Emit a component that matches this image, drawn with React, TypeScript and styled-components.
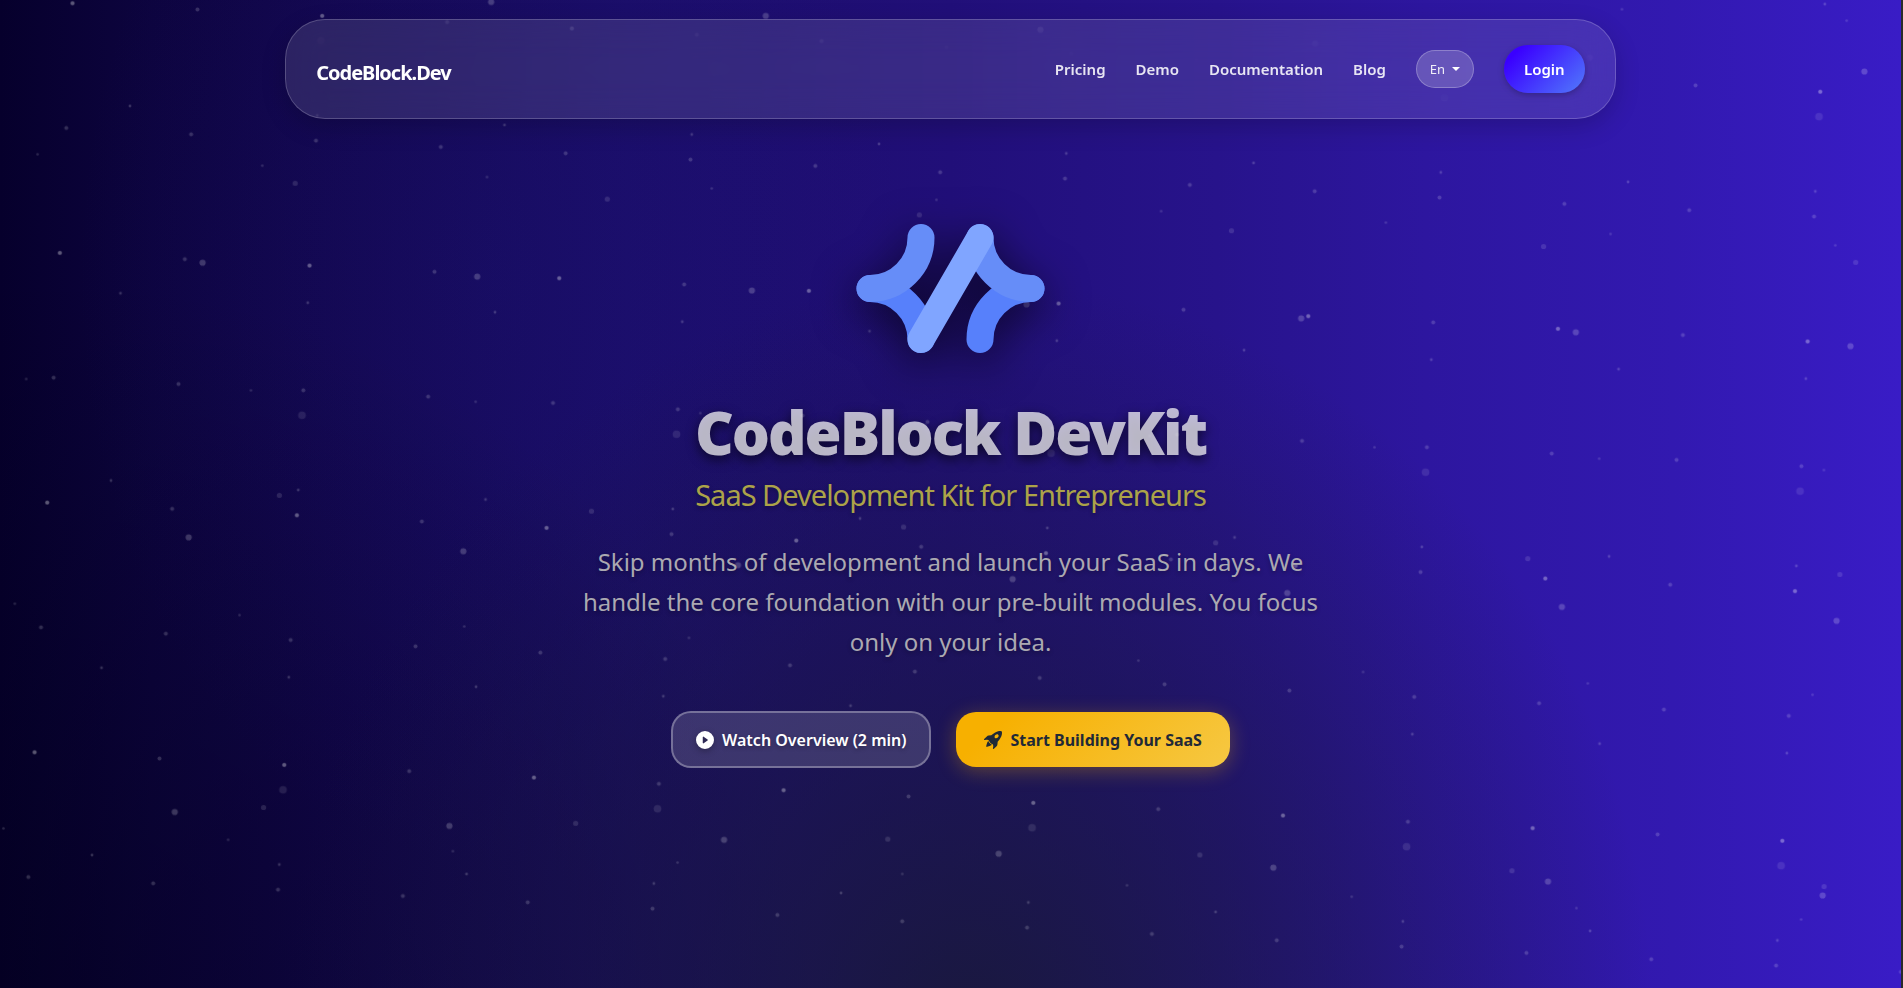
import React from 'react';
import styled, { createGlobalStyle } from 'styled-components';
import { BsPlayCircleFill, BsRocketTakeoffFill } from 'react-icons/bs';

const GlobalStyle = createGlobalStyle`
  * { box-sizing: border-box; }
  body {
    margin: 0;
    background: #2a2a2a;
    font-family: 'Noto Sans', 'Open Sans', sans-serif;
  }
`;

const Page = styled.div`
  position: relative;
  min-height: 100vh;
  margin-right: 2px;
  overflow: hidden;
  background:
    radial-gradient(ellipse 36% 76% at 51% 104%, rgba(24, 26, 52, 0.85) 0%, rgba(24, 24, 56, 0.5) 45%, rgba(24, 22, 60, 0) 100%),
    radial-gradient(ellipse 42% 80% at 2% 108%, rgba(2, 0, 26, 0.55) 0%, rgba(2, 0, 26, 0) 100%),
    radial-gradient(ellipse 22% 60% at 26% 28%, rgba(26, 26, 140, 0.16) 0%, rgba(26, 26, 140, 0) 100%),
    linear-gradient(90deg, #06002c 0%, #0d043f 8%, #13074e 17%, #170a5a 25%, #1b0d68 33%, #210f79 50%, #27138b 64%, #2d169f 75%, #3219b0 88%, #391cc6 100%);
`;

const StarField = styled.svg`
  position: absolute;
  inset: 0;
  width: 100%;
  height: 100%;
  pointer-events: none;
`;

const Content = styled.div`
  position: relative;
  padding-top: 19px;
`;

const Nav = styled.nav`
  display: flex;
  align-items: center;
  justify-content: space-between;
  width: 70%;
  height: 100px;
  margin: 0 auto;
  padding: 0 30px;
  border: 1px solid rgba(255, 255, 255, 0.2);
  border-radius: 40px;
  background: rgba(255, 255, 255, 0.11);
  backdrop-filter: blur(20px);
  box-shadow: 0 8px 24px rgba(0, 0, 0, 0.18);
`;

const Brand = styled.a`
  padding-top: 6px;
  color: #fff;
  font-size: 20px;
  font-weight: 700;
  letter-spacing: -1px;
  text-decoration: none;
`;

const NavItems = styled.div`
  display: flex;
  align-items: center;
  gap: 30px;
`;

const NavLink = styled.a`
  color: rgba(255, 255, 255, 0.88);
  font-size: 15px;
  font-weight: 600;
  text-decoration: none;
`;

const LanguagePicker = styled.div`
  position: relative;
`;

const LanguageSelect = styled.select`
  display: block;
  width: 58px;
  height: 38px;
  padding: 0 13px;
  appearance: none;
  border: 1px solid rgba(255, 255, 255, 0.25);
  border-radius: 19px;
  background: rgba(255, 255, 255, 0.19);
  color: rgba(255, 255, 255, 0.9);
  font-family: inherit;
  font-size: 13px;

  option { color: #1e293b; }
`;

const Caret = styled.svg`
  position: absolute;
  top: 17px;
  right: 14px;
  width: 8px;
  height: 4px;
  pointer-events: none;
`;

const LoginButton = styled.button`
  width: 81px;
  height: 48px;
  padding: 0;
  border: 0;
  border-radius: 24px;
  background: linear-gradient(135deg, #3a00ff 15%, #517bfb 100%);
  box-shadow: 0 2px 6px rgba(0, 0, 0, 0.25);
  color: #fff;
  font-family: inherit;
  font-size: 15px;
  font-weight: 600;
`;

const Hero = styled.main`
  display: flex;
  flex-direction: column;
  align-items: center;
  padding: 104px 24px 0;
  text-align: center;
`;

const Logo = styled.svg`
  width: 190px;
  height: 131px;
  overflow: visible;
  filter: drop-shadow(0 10px 22px rgba(0, 0, 0, 0.65));
`;

const Title = styled.h1`
  margin: 40px 0 5px;
  color: rgba(255, 255, 255, 0.71);
  font-size: 60px;
  font-weight: 900;
  line-height: 76px;
  letter-spacing: -2px;
  text-shadow: 0 4px 12px rgba(0, 0, 0, 0.6);
`;

const Subtitle = styled.p`
  margin: 0;
  color: #aca349;
  font-size: 29px;
  line-height: 40px;
  letter-spacing: -1px;
  text-shadow: 0 2px 4px rgba(0, 0, 0, 0.3);
`;

const Lead = styled.p`
  max-width: 740px;
  margin: 27px 0 0;
  color: #aba9b1;
  font-size: 24px;
  line-height: 40px;
  text-shadow: 0 2px 4px rgba(0, 0, 0, 0.3);
`;

const Actions = styled.div`
  display: flex;
  align-items: center;
  gap: 25px;
  margin-top: 49px;
`;

const ActionButton = styled.button<{ $primary?: boolean }>`
  display: flex;
  align-items: center;
  gap: 8px;
  height: ${(p) => (p.$primary ? 55 : 57)}px;
  padding: ${(p) => (p.$primary ? '0 28px' : '0 23px')};
  border: ${(p) => (p.$primary ? '0' : '2px solid rgba(255, 255, 255, 0.3)')};
  border-radius: 20px;
  background: ${(p) =>
    p.$primary ? 'linear-gradient(135deg, #f7b000 15%, #f6c843 100%)' : 'rgba(255, 255, 255, 0.15)'};
  box-shadow: ${(p) => (p.$primary ? '0 4px 20px rgba(247, 176, 0, 0.3)' : 'none')};
  color: ${(p) => (p.$primary ? '#1f2937' : '#fff')};
  font-family: inherit;
  font-size: 16px;
  font-weight: ${(p) => (p.$primary ? 700 : 600)};
  text-shadow: ${(p) => (p.$primary ? 'none' : '0 2px 4px rgba(0, 0, 0, 0.3)')};

  svg {
    width: 18px;
    height: 18px;
    filter: ${(p) => (p.$primary ? 'none' : 'drop-shadow(0 2px 3px rgba(0, 0, 0, 0.3))')};
  }
`;

// Each star layer repeats one dot on a square grid; the whole sky is tilted slightly.
const SKY_TILT = 2.9;
const STAR_LAYERS = [
  { id: 'a', size: 125, x: 66.3, y: 128, r: 2, alpha: 0.17 },
  { id: 'b', size: 250, x: 59.8, y: 253, r: 2.1, alpha: 0.2 },
  { id: 'c', size: 275, x: 202.6, y: 262.7, r: 3.1, alpha: 0.2 },
  { id: 'd', size: 312.5, x: 295.2, y: 183.3, r: 2.6, alpha: 0.12 },
  { id: 'e', size: 375, x: 302, y: 415.3, r: 3.8, alpha: 0.1 },
  { id: 'f', size: 187.5, x: 120.5, y: 293.3, r: 1.4, alpha: 0.18 },
  { id: 'g', size: 225, x: 37.6, y: 154.3, r: 1.3, alpha: 0.14 },
];

const Stars = () => (
  <StarField aria-hidden="true">
    <defs>
      {STAR_LAYERS.map((s) => (
        <pattern
          key={s.id}
          id={`stars-${s.id}`}
          width={s.size}
          height={s.size}
          patternUnits="userSpaceOnUse"
          patternTransform={`translate(${s.x} ${s.y}) rotate(${SKY_TILT}) translate(${-s.size / 2} ${-s.size / 2})`}
        >
          <circle cx={s.size / 2} cy={s.size / 2} r={s.r} fill="#fff" fillOpacity={s.alpha} />
        </pattern>
      ))}
    </defs>
    {STAR_LAYERS.map((s) => (
      <rect key={s.id} width="100%" height="100%" fill={`url(#stars-${s.id})`} />
    ))}
  </StarField>
);

const LINKS = ['Pricing', 'Demo', 'Documentation', 'Blog'];

export default function App() {
  return (
    <>
      <GlobalStyle />
      <Page>
        <Stars />
        <Content>
          <Nav>
            <Brand href="#">CodeBlock.Dev</Brand>
            <NavItems>
              {LINKS.map((label) => (
                <NavLink key={label} href={`#${label.toLowerCase()}`}>{label}</NavLink>
              ))}
              <LanguagePicker>
                <LanguageSelect aria-label="Language" defaultValue="en">
                  <option value="en">En</option>
                </LanguageSelect>
                <Caret viewBox="0 0 8 4"><path d="M0 0h8L4 4z" fill="#fff" /></Caret>
              </LanguagePicker>
              <LoginButton type="button">Login</LoginButton>
            </NavItems>
          </Nav>
          <Hero>
            <Logo viewBox="0 0 190 131" fill="none" strokeWidth="27" strokeLinecap="round" aria-label="CodeBlock logo">
              <path d="M14 65.5A51 51 0 0 1 65 116.5" stroke="#5780fb" />
              <path d="M175 65.5A51 51 0 0 0 124 116.5" stroke="#5780fb" />
              <path d="M65 14.5A51 51 0 0 1 14 65.5" stroke="#668df8" />
              <path d="M124 14.5A51 51 0 0 0 175 65.5" stroke="#668df8" />
              <path d="M124 14.5L65 116.5" stroke="#80a5ff" />
            </Logo>
            <Title>CodeBlock DevKit</Title>
            <Subtitle>SaaS Development Kit for Entrepreneurs</Subtitle>
            <Lead>
              Skip months of development and launch your SaaS in days. We handle the core foundation
              with our pre-built modules. You focus only on your idea.
            </Lead>
            <Actions>
              <ActionButton type="button"><BsPlayCircleFill />Watch Overview (2 min)</ActionButton>
              <ActionButton type="button" $primary><BsRocketTakeoffFill />Start Building Your SaaS</ActionButton>
            </Actions>
          </Hero>
        </Content>
      </Page>
    </>
  );
}
